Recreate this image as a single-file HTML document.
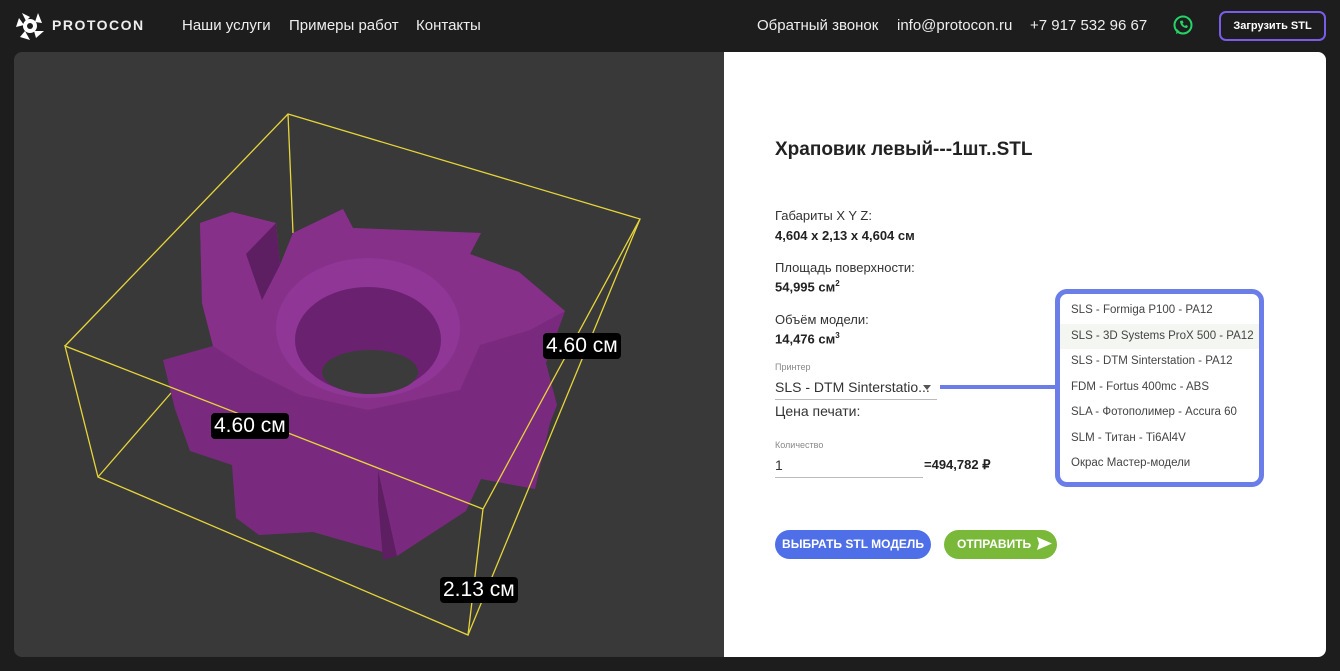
<!DOCTYPE html>
<html><head><meta charset="utf-8"><style>
*{margin:0;padding:0;box-sizing:border-box}
body{width:1340px;height:671px;background:#1d1d1d;font-family:"Liberation Sans",sans-serif;position:relative;overflow:hidden;color:#222}
.nav{position:absolute;top:0;left:0;width:1340px;height:52px;color:#eee;font-size:15px}
.nav span{position:absolute;top:17px}
.left{position:absolute;left:14px;top:52px;width:710px;height:605px;background:#393939;border-radius:8px 0 0 8px}
.right{position:absolute;left:724px;top:52px;width:602px;height:605px;background:#fff;border-radius:0 8px 8px 0}
.t{position:absolute;font-size:13px;color:#333;white-space:nowrap}
.b{font-weight:bold;color:#222}
.lbl{position:absolute;background:#000;color:#fff;font-size:21px;padding:1px 3px;border-radius:4px}
.dd{position:absolute;left:1055px;top:289px;width:209px;height:198px;border:5px solid #6a7de8;border-radius:12px;background:#fff;overflow:hidden}
.dd div{height:25.5px;line-height:25.5px;padding-left:11px;font-size:11.5px;color:#444;white-space:nowrap}
.btn{position:absolute;top:530px;height:29px;border-radius:15px;color:#fff;font-size:12px;font-weight:bold;line-height:29px;text-align:center}
</style></head><body>
<div class="nav">
<svg style="position:absolute;left:14px;top:11px" width="32" height="30" viewBox="0 0 32 30"><g fill="#fff"><polygon points="8,2 16,6 12,10"/><polygon points="24,2 28,12 21,11"/><polygon points="30,20 22,27 20,20"/><polygon points="16,29 6,26 11,20"/><polygon points="2,16 5,7 10,14"/><circle cx="16" cy="15" r="7"/></g><circle cx="16" cy="15" r="3" fill="#1d1d1d"/></svg>
<span style="left:52px;top:17px;font-weight:bold;letter-spacing:1.5px;font-size:14px">PROTOCON</span>
<span style="left:182px">Наши услуги</span>
<span style="left:289px">Примеры работ</span>
<span style="left:416px">Контакты</span>
<span style="left:757px">Обратный звонок</span>
<span style="left:897px">info@protocon.ru</span>
<span style="left:1030px">+7 917 532 96 67</span>
<svg style="position:absolute;left:1172px;top:14px" width="22" height="22" viewBox="0 0 22 22"><circle cx="11" cy="11" r="8.5" fill="none" stroke="#25d366" stroke-width="2"/><path d="M4 20 L5 15 L8 18Z" fill="#25d366"/><path d="M8 7c0 4 3 7 7 7l1-2-2-1-1 1c-1-.5-2-1.5-2.5-2.5l1-1-1-2z" fill="#25d366"/></svg>
<div style="position:absolute;left:1219px;top:11px;width:107px;height:30px;border:2px solid #7a5ce8;border-radius:7px;font-size:11px;font-weight:bold;text-align:center;line-height:26px;color:#fff">Загрузить STL</div>
</div>
<div class="left"></div>
<svg style="position:absolute;left:0;top:0" width="724" height="671">
<g stroke="#e6d53a" stroke-width="1.3" fill="none">
<line x1="288" y1="114" x2="293" y2="233"/>
<line x1="98" y1="477" x2="171" y2="393"/>
</g>
<path fill="#7a2a7e" d="M200 223 L232 212 L276 223 L280 265 L293 233 L343 209 L353 228 L481 233 L470 254 L519 272 L565 311 L546 363 L557 405 L550 423 L535 489 L481 479 L466 511 L397 556 L313 532 L259 535 L236 518 L232 465 L190 451 L175 409 L163 360 L213 346 L202 303 Z"/>
<path fill="#863089" d="M200 223 L232 212 L276 223 L280 265 L293 233 L343 209 L353 228 L481 233 L470 254 L519 272 L565 311 L530 330 L480 345 L460 390 L368 410 L300 395 L250 370 L213 346 L202 303 Z"/>
<path fill="#5e1f62" d="M378 470 L397 556 L383 560 L378 500Z M246 254 L276 223 L280 265 L262 300Z"/>
<ellipse cx="368" cy="328" rx="92" ry="70" fill="#8f3696"/>
<ellipse cx="368" cy="340" rx="73" ry="53" fill="#6a2270"/>
<ellipse cx="370" cy="372" rx="48" ry="22" fill="#3b3b3b"/>
<g stroke="#e6d53a" stroke-width="1.3" fill="none">
<polyline points="65,346 288,114 640,219 483,509 65,346 98,477 468,635 483,509"/>
<line x1="640" y1="219" x2="468" y2="635"/>
</g>
</svg>
<div class="lbl" style="left:543px;top:333px">4.60 см</div>
<div class="lbl" style="left:211px;top:413px">4.60 см</div>
<div class="lbl" style="left:440px;top:577px">2.13 см</div>
<div class="right"></div>
<div class="t b" style="left:775px;top:139px;font-size:19px">Храповик левый---1шт..STL</div>
<div class="t" style="left:775px;top:208px">Габариты X Y Z:</div>
<div class="t b" style="left:775px;top:228px">4,604 x 2,13 x 4,604 см</div>
<div class="t" style="left:775px;top:260px">Площадь поверхности:</div>
<div class="t b" style="left:775px;top:279px">54,995 см<sup style="font-size:8px">2</sup></div>
<div class="t" style="left:775px;top:312px">Объём модели:</div>
<div class="t b" style="left:775px;top:331px">14,476 см<sup style="font-size:8px">3</sup></div>
<div class="t" style="left:775px;top:362px;font-size:9px;color:#888">Принтер</div>
<div class="t" style="left:775px;top:379px;font-size:14px">SLS - DTM Sinterstatio...</div>
<div style="position:absolute;left:923px;top:385px;border:4px solid transparent;border-top:5px solid #555"></div>
<div style="position:absolute;left:775px;top:399px;width:162px;height:1px;background:#bbb"></div>
<div style="position:absolute;left:940px;top:385px;width:117px;height:4px;background:#6a7de8"></div>
<div class="t" style="left:775px;top:403px;font-size:14px">Цена печати:</div>
<div class="t" style="left:775px;top:440px;font-size:9px;color:#888">Количество</div>
<div class="t" style="left:775px;top:457px;font-size:14px">1</div>
<div style="position:absolute;left:775px;top:477px;width:148px;height:1px;background:#bbb"></div>
<div class="t b" style="left:924px;top:457px;font-size:13px">=494,782 ₽</div>
<div class="dd"><div style="margin-top:4px">SLS - Formiga P100 - PA12</div><div style="background:#f3f6f1">SLS - 3D Systems ProX 500 - PA12</div><div>SLS - DTM Sinterstation - PA12</div><div>FDM - Fortus 400mc - ABS</div><div>SLA - Фотополимер - Accura 60</div><div>SLM - Титан - Ti6Al4V</div><div>Окрас Мастер-модели</div></div>
<div class="btn" style="left:775px;width:156px;background:#4f6fe8">ВЫБРАТЬ STL МОДЕЛЬ</div>
<div class="btn" style="left:944px;width:113px;background:#7ab83a;text-align:left;padding-left:13px">ОТПРАВИТЬ <svg width="15" height="13" viewBox="0 0 15 13" style="vertical-align:-2px;margin-left:3px"><path d="M0 0 L15 6.5 L0 13 L2 6.5Z" fill="#fff"/></svg></div>
</body></html>
